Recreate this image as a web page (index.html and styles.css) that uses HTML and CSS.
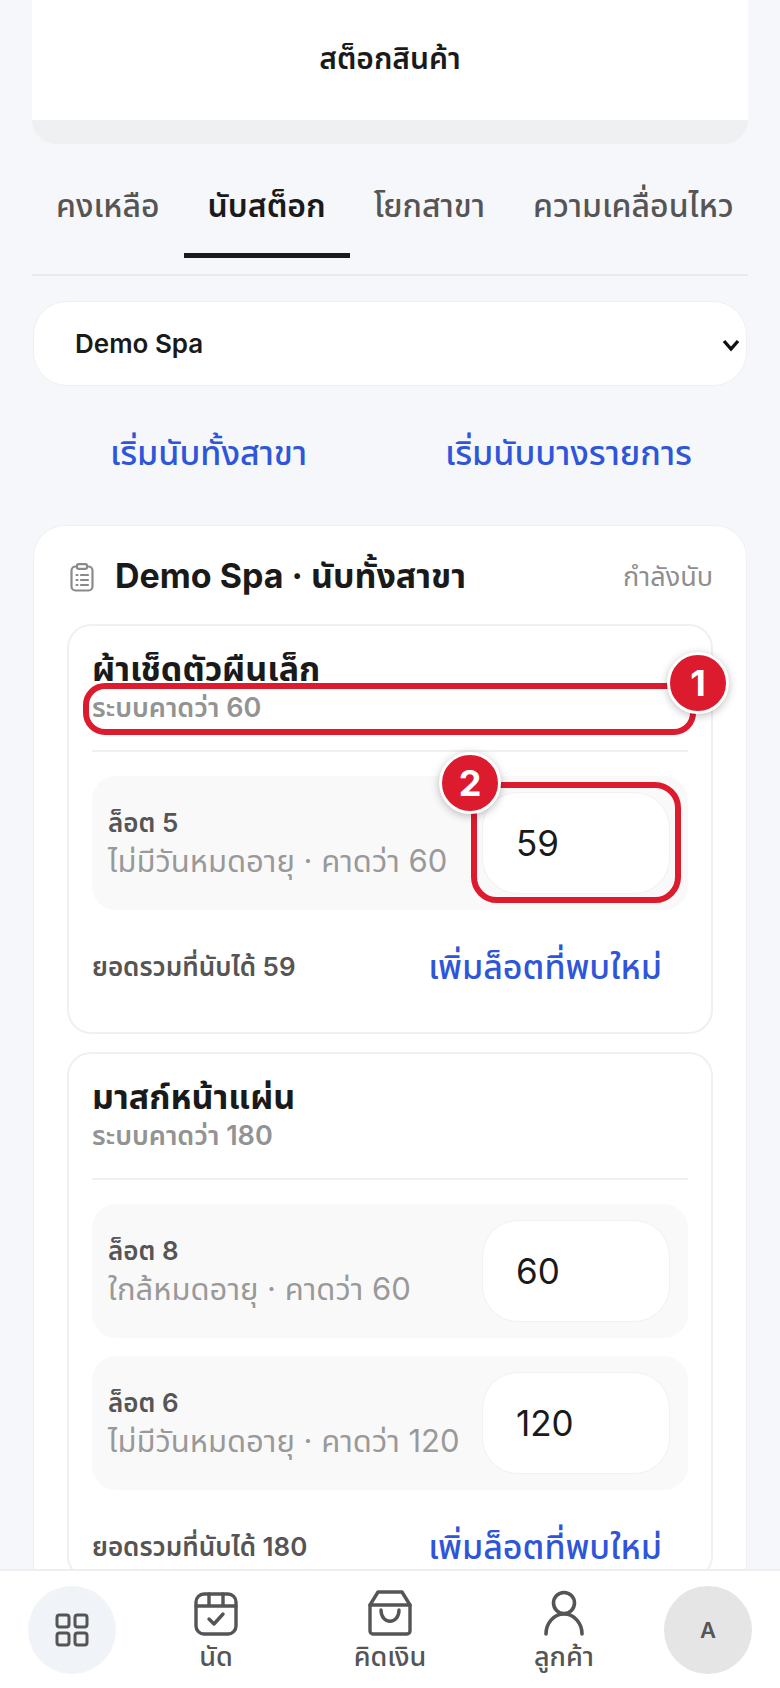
FILE: index.html
```html
<!DOCTYPE html>
<html lang="th">
<head>
    <meta charset="UTF-8">
    <meta name="viewport" content="width=device-width, initial-scale=1.0">
    <title>สต็อกสินค้า</title>
    <link rel="stylesheet" href="styles.css">
</head>
<body>
    <div class="page">
        <div class="header-card">
            <div class="header-title"><h1>สต็อกสินค้า</h1></div>
        </div>

        <div class="tabs">
            <div class="tab">คงเหลือ</div>
            <div class="tab active">นับสต็อก</div>
            <div class="tab">โยกสาขา</div>
            <div class="tab">ความเคลื่อนไหว</div>
        </div>

        <div class="branch-select">
            <select>
                <option>Demo Spa</option>
            </select>
            <svg class="chevron" viewBox="0 0 20 20" width="20" height="20"><path d="M3 6l7 8 7-8" fill="none" stroke="#111" stroke-width="3.4"/></svg>
        </div>

        <div class="start-actions">
            <a class="link start-link">เริ่มนับทั้งสาขา</a>
            <a class="link start-link">เริ่มนับบางรายการ</a>
        </div>

        <div class="count-card">
            <div class="count-head">
                <svg class="clipboard" viewBox="0 0 24 29" width="24" height="29" fill="none" stroke="#8a8a8a" stroke-width="2.2" stroke-linecap="round">
                    <rect x="1.5" y="3.5" width="21" height="24" rx="4"/>
                    <rect x="7" y="1.2" width="10" height="4.6" rx="1.6" fill="#fff"/>
                    <path d="M6.5 12h1M11 12h7M6.5 17h1M11 17h7M6.5 22h1M11 22h7"/>
                </svg>
                <h2>Demo Spa · นับทั้งสาขา</h2>
                <span class="count-status">กำลังนับ</span>
            </div>

            <div class="item first">
                <div class="item-name">ผ้าเช็ดตัวผืนเล็ก</div>
                <div class="item-expected">ระบบคาดว่า 60</div>
                <div class="callout callout-expected"><span class="badge">1</span></div>
                <div class="lots">
                    <div class="lot">
                        <div class="lot-info">
                            <div class="lot-name">ล็อต 5</div>
                            <div class="lot-meta">ไม่มีวันหมดอายุ · คาดว่า 60</div>
                        </div>
                        <input class="lot-input" value="59">
                        <div class="callout callout-input"><span class="badge">2</span></div>
                    </div>
                </div>
                <div class="item-foot">
                    <span class="item-total">ยอดรวมที่นับได้ 59</span>
                    <a class="link add-lot">เพิ่มล็อตที่พบใหม่</a>
                </div>
            </div>

            <div class="item">
                <div class="item-name">มาสก์หน้าแผ่น</div>
                <div class="item-expected">ระบบคาดว่า 180</div>
                <div class="lots">
                    <div class="lot">
                        <div class="lot-info">
                            <div class="lot-name">ล็อต 8</div>
                            <div class="lot-meta">ใกล้หมดอายุ · คาดว่า 60</div>
                        </div>
                        <input class="lot-input" value="60">
                    </div>
                    <div class="lot">
                        <div class="lot-info">
                            <div class="lot-name">ล็อต 6</div>
                            <div class="lot-meta">ไม่มีวันหมดอายุ · คาดว่า 120</div>
                        </div>
                        <input class="lot-input" value="120">
                    </div>
                </div>
                <div class="item-foot">
                    <span class="item-total">ยอดรวมที่นับได้ 180</span>
                    <a class="link add-lot">เพิ่มล็อตที่พบใหม่</a>
                </div>
            </div>
        </div>
    </div>

    <nav class="bottom-nav">
        <div class="round-btn menu-btn">
            <svg viewBox="0 0 34 34" width="34" height="34" fill="none" stroke="#555" stroke-width="3">
                <rect x="2" y="2" width="12" height="12" rx="2.5"/>
                <rect x="20" y="2" width="12" height="12" rx="2.5"/>
                <rect x="2" y="20" width="12" height="12" rx="2.5"/>
                <rect x="20" y="20" width="12" height="12" rx="2.5"/>
            </svg>
        </div>
        <div class="nav-item">
            <svg viewBox="0 0 44 44" width="44" height="44" fill="none" stroke="#555" stroke-width="3.4" stroke-linejoin="round" stroke-linecap="round">
                <rect x="2" y="2" width="40" height="40" rx="8"/>
                <path d="M2 14h40M15 2v12M29 2v12"/>
                <path d="M15 27l5 5 9-10"/>
            </svg>
            <span>นัด</span>
        </div>
        <div class="nav-item">
            <svg viewBox="0 0 44 46" width="44" height="46" fill="none" stroke="#555" stroke-width="3.4" stroke-linejoin="round" stroke-linecap="round">
                <path d="M10 2h24l8 13v26a3 3 0 0 1-3 3H5a3 3 0 0 1-3-3V15z"/>
                <path d="M2 15h40"/>
                <path d="M13 20c0 15 18 15 18 0"/>
            </svg>
            <span>คิดเงิน</span>
        </div>
        <div class="nav-item">
            <svg viewBox="0 0 40 46" width="40" height="46" fill="none" stroke="#555" stroke-width="3.6" stroke-linecap="round">
                <circle cx="20" cy="13" r="10.5"/>
                <path d="M2 44c0-11 8-20 18-20s18 9 18 20"/>
            </svg>
            <span>ลูกค้า</span>
        </div>
        <div class="round-btn avatar">A</div>
    </nav>
</body>
</html>
```

FILE: styles.css
```css
* {
    box-sizing: border-box;
}
html, body {
    margin: 0;
    padding: 0;
    height: 1688px;
    overflow: hidden;
}
body {
    font-family: Inter, "Noto Sans", "Noto Sans Thai", sans-serif;
    background-color: #f5f7fa;
    color: #1a1a1a;
}
.page {
    padding: 0 32px;
}
.link {
    color: #2f56d8;
    font-weight: 500;
}

/* header */
.header-card {
    height: 144px;
    background-color: #eef0f2;
    border-radius: 0 0 24px 24px;
}
.header-title {
    height: 120px;
    background-color: #fff;
    display: flex;
    justify-content: center;
    align-items: center;
    padding-bottom: 0;
}
.header-title h1 {
    margin: 0;
    font-size: 30px;
    font-weight: 600;
}

/* tabs */
.tabs {
    display: flex;
    margin-top: 16px;
    height: 116px;
    overflow: hidden;
    border-bottom: 2px solid #e8eaec;
}
.tab {
    flex: none;
    height: 98px;
    padding: 0 24px;
    display: flex;
    align-items: center;
    font-size: 32px;
    font-weight: 500;
    color: #555;
    border-bottom: 5px solid transparent;
}
.tab.active {
    color: #1a1a1a;
    font-weight: 600;
    border-bottom-color: #1a1a1a;
}

/* branch select */
.branch-select {
    position: relative;
    margin: 25px 1px 0;
}
.branch-select select {
    display: block;
    width: 100%;
    height: 85px;
    padding: 0 41px;
    appearance: none;
    background-color: #fff;
    border: 1px solid #eef0f2;
    border-radius: 34px;
    font-family: inherit;
    font-size: 26px;
    font-weight: 600;
    color: #1a1a1a;
}
.chevron {
    position: absolute;
    right: 6px;
    top: 34px;
}
.start-actions {
    display: flex;
    justify-content: space-between;
    padding: 0 56px 0 78px;
    margin-top: 40px;
    height: 56px;
    align-items: center;
}
.start-link {
    font-size: 34px;
}

/* count card */
.count-card {
    margin: 43px 1px 0;
    padding: 28px 33px 0;
    background-color: #fff;
    border: 1px solid #eef0f2;
    border-radius: 32px;
}
.count-head {
    display: flex;
    align-items: center;
    height: 46px;
    margin-bottom: 24px;
}
.clipboard {
    margin-left: 3px;
    margin-right: 21px;
}
.count-head h2 {
    margin: 0;
    flex: 1;
    font-size: 34px;
    font-weight: 700;
}
.count-status {
    font-size: 27px;
    color: #8e8e8e;
}
.item {
    position: relative;
    padding: 22px 23px 0;
    margin-bottom: 18px;
    background-color: #fff;
    border: 2px solid #eef0f2;
    border-radius: 24px;
}
.item.first {
    height: 410px;
}
.item-name {
    font-size: 34px;
    font-weight: 700;
    line-height: 42px;
}
.item-expected {
    font-size: 27px;
    font-weight: 600;
    color: #939393;
    line-height: 36px;
    padding-bottom: 24px;
    border-bottom: 2px solid #eef0f2;
}
.lots {
    margin-top: 24px;
    display: flex;
    flex-direction: column;
    gap: 18px;
}
.lot {
    position: relative;
    display: flex;
    align-items: center;
    justify-content: space-between;
    height: 134px;
    padding: 0 18px 0 16px;
    background-color: #f9f9fa;
    border-radius: 24px;
}
.lot-name {
    font-size: 26px;
    font-weight: 600;
    color: #555;
    line-height: 36px;
}
.lot-meta {
    font-size: 31px;
    color: #999;
    line-height: 40px;
    white-space: nowrap;
}
.lot-input {
    flex: none;
    width: 188px;
    height: 102px;
    padding: 0 33px;
    background-color: #fff;
    border: 1px solid #f0f1f2;
    border-radius: 36px;
    font-family: inherit;
    font-size: 35px;
    color: #1a1a1a;
}
.item-foot {
    display: flex;
    justify-content: space-between;
    align-items: center;
    padding-right: 26px;
    margin-top: 28px;
    height: 60px;
}
.item-total {
    font-size: 26px;
    font-weight: 600;
    color: #555;
}
.add-lot {
    font-size: 34px;
}

/* annotations over the form */
.callout {
    position: absolute;
    border: 6px solid #dc1c2e;
    pointer-events: none;
}
.callout-expected {
    left: 14px;
    top: 57px;
    width: 613px;
    height: 52px;
    border-radius: 22px;
}
.callout-input {
    right: 7px;
    top: 6px;
    width: 210px;
    height: 121px;
    border-radius: 26px;
}
.badge {
    position: absolute;
    width: 62px;
    height: 62px;
    display: flex;
    align-items: center;
    justify-content: center;
    background-color: #dc1c2e;
    border: 3px solid #fff;
    border-radius: 50%;
    box-shadow: 0 2px 8px rgba(0, 0, 0, 0.25);
    color: #fff;
    font-size: 36px;
    font-weight: 700;
}
.callout-expected .badge {
    right: -39px;
    top: -37px;
}
.callout-input .badge {
    left: -38px;
    top: -36px;
}

/* bottom nav */
.bottom-nav {
    position: fixed;
    left: 0;
    right: 0;
    bottom: 0;
    height: 119px;
    padding: 0 28px 14px;
    display: flex;
    justify-content: space-between;
    align-items: flex-end;
    background-color: #fff;
    border-top: 2px solid #eceef0;
}
.round-btn {
    flex: none;
    width: 88px;
    height: 88px;
    border-radius: 50%;
    display: flex;
    align-items: center;
    justify-content: center;
}
.menu-btn {
    background-color: #f0f4f8;
}
.avatar {
    background-color: #e5e5e5;
    color: #555;
    font-size: 22px;
    font-weight: 600;
}
.nav-item {
    width: 148px;
    display: flex;
    flex-direction: column;
    align-items: center;
    font-size: 27px;
    font-weight: 500;
    color: #555;
    line-height: 34px;
    gap: 4px;
}
```
